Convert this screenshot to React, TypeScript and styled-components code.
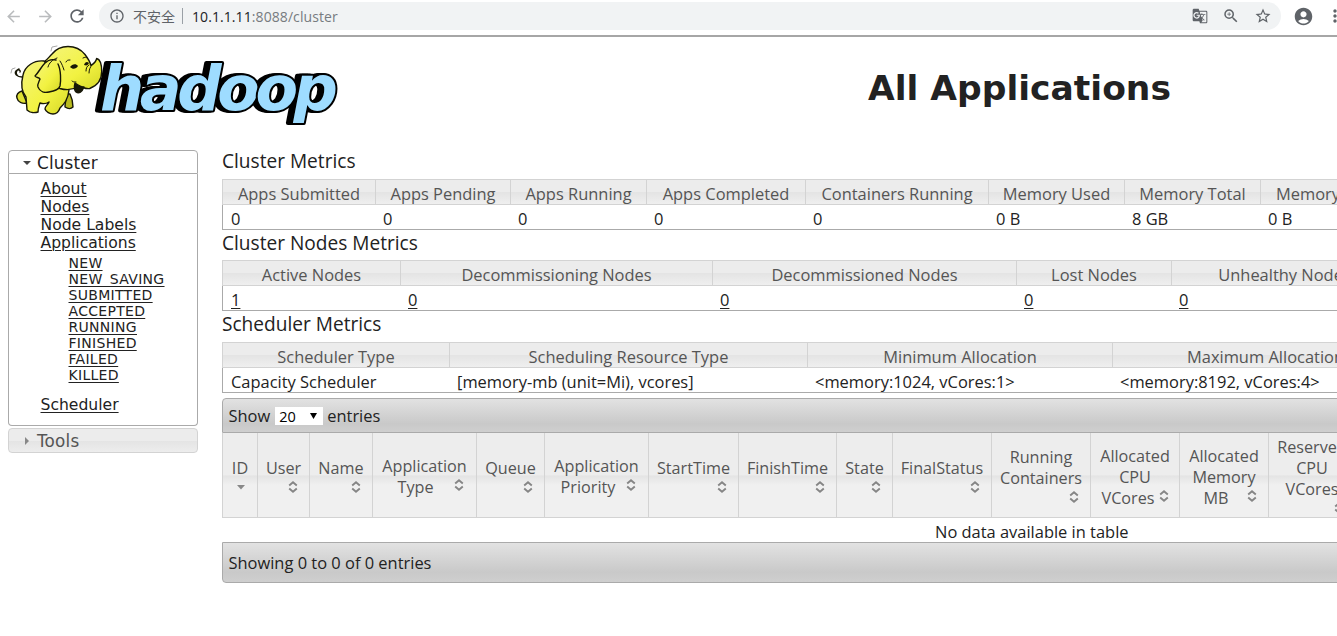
import React from 'react';
import styled, { createGlobalStyle } from 'styled-components';
import { MdAccountCircle, MdMoreVert, MdOutlineStarBorder, MdZoomIn, MdArrowBack, MdArrowForward, MdRefresh, MdInfoOutline, MdGTranslate } from 'react-icons/md';

const Global = createGlobalStyle`
  * { box-sizing: border-box; }
  html, body { margin: 0; padding: 0; background: #fff; overflow: hidden; }
  body { font-family: 'Open Sans', 'Noto Sans', 'Noto Sans CJK SC', sans-serif; font-size: 16.45px; color: #222; }
`;

const Page = styled.div`
  width: 100vw;
  height: 100vh;
  overflow: hidden;
  background: #fff;
`;

const BrowserBar = styled.div`
  height: 37px;
  display: flex;
  align-items: center;
  padding-bottom: 3px;
  border-bottom: 2px solid #a6a6a6;
  color: #5f6368;
  svg { flex: none; display: block; }
`;

const NavButton = styled.span<{ $w: number; $faded?: boolean }>`
  width: ${p => p.$w}px;
  flex: none;
  display: flex;
  justify-content: center;
  color: ${p => (p.$faded ? '#babcbe' : '#5f6368')};
`;

const AddressBar = styled.div`
  width: 1182px;
  height: 28px;
  margin-left: 9px;
  padding: 0 9px 0 10px;
  border-radius: 14px;
  background: #f1f3f4;
  display: flex;
  align-items: center;
  flex: none;
`;

const Insecure = styled.span`
  margin-left: 8px;
  font: 14px/20px 'Noto Sans CJK SC', sans-serif;
  width: 43px;
  white-space: nowrap;
`;

const Divider = styled.span`
  width: 1px;
  height: 16px;
  margin: 0 9px 0 6px;
  background: #9aa0a6;
`;

const Url = styled.span`
  flex: 1;
  font-size: 14px;
  letter-spacing: 0.08px;
  color: #777b80;
  b { font-weight: 400; color: #202124; }
`;

const AddressActions = styled.span`
  display: flex;
  align-items: center;
  gap: 14px;
`;

const Header = styled.header`
  height: 113px;
  display: flex;
`;

const Title = styled.h1`
  margin: 0;
  padding: 29px 0 0 518px;
  font: bold 34.5px/44px 'DejaVu Sans', sans-serif;
  white-space: nowrap;
`;

const Body = styled.div`
  display: flex;
  gap: 24px;
  padding-left: 8px;
`;

const Sidebar = styled.nav`
  width: 190px;
  flex: none;
  font-family: 'DejaVu Sans', sans-serif;
`;

const SideHead = styled.div<{ $open?: boolean }>`
  height: ${p => (p.$open ? 24 : 25)}px;
  display: flex;
  align-items: center;
  gap: 5px;
  padding: 1px 0 0 13px;
  font-size: 16.8px;
  letter-spacing: 0.2px;
  border: 1px solid ${p => (p.$open ? '#aaa' : '#d3d3d3')};
  border-radius: ${p => (p.$open ? '4px 4px 0 0' : '4px')};
  color: ${p => (p.$open ? '#212121' : '#555')};
  background: ${p => (p.$open ? '#fff' : 'linear-gradient(#ececec 0 50%, #e4e4e4 52%, #ededed)')};
`;

const SidePanel = styled.div`
  height: 252px;
  margin-bottom: 2px;
  padding: 6px 0 0 31px;
  border: 1px solid #aaa;
  border-top: 0;
  border-radius: 0 0 4px 4px;
`;

const SideLink = styled.div<{ $sub?: boolean }>`
  margin-left: ${p => (p.$sub ? 28.5 : 0.5)}px;
  font-size: ${p => (p.$sub ? 14 : 15.6)}px;
  letter-spacing: ${p => (p.$sub ? 0.3 : 0)}px;
  line-height: ${p => (p.$sub ? 16 : 18)}px;
  text-decoration: underline;
  text-decoration-thickness: 1px;
  text-underline-offset: 2px;
  white-space: pre;
`;

const SubList = styled.div`
  padding: 3px 0 13px;
`;

const Main = styled.main`
  width: 1250px;
  flex: none;
`;

const SectionTitle = styled.h3<{ $h: number; $line: number }>`
  height: ${p => p.$h}px;
  margin: 0;
  font-weight: 400;
  font-size: 19.1px;
  line-height: ${p => p.$line}px;
`;

const GridRow = styled.div<{ $cols: string }>`
  display: grid;
  grid-template-columns: ${p => p.$cols};
`;

const HeadCell = styled.div`
  height: 26px;
  padding-top: 2px;
  border: 1px solid #d3d3d3;
  border-right: 0;
  background: linear-gradient(#ececec 0 50%, #e4e4e4 52%, #efefef);
  color: #555;
  line-height: 23px;
  text-align: center;
  white-space: nowrap;
`;

const ValueRow = styled(GridRow)`
  height: 25px;
  border: 1px solid #aaa;
  border-top: 0;
`;

const ValueCell = styled.div<{ $link?: boolean }>`
  padding-left: 8px;
  line-height: 28px;
  height: 24px;
  white-space: nowrap;
  text-decoration: ${p => (p.$link ? 'underline' : 'none')};
  text-decoration-thickness: 1px;
  text-underline-offset: 2px;
  & + & { padding-left: 7px; }
`;

const Toolbar = styled.div<{ $bottom?: boolean }>`
  height: ${p => (p.$bottom ? 41 : 35)}px;
  margin-top: ${p => (p.$bottom ? 0 : 5)}px;
  display: flex;
  align-items: center;
  padding: 0 5.5px;
  border: 1px solid #aaa;
  border-radius: ${p => (p.$bottom ? '0 0 4px 4px' : '4px 4px 0 0')};
  background: linear-gradient(#e2e2e2, #c9c9c9 75%, #cfcfcf);
`;

const PageSize = styled.span`
  width: 48px;
  height: 18px;
  margin: 1px 4px 0 5px;
  padding: 0 6px 0 4px;
  display: flex;
  align-items: center;
  justify-content: space-between;
  background: #fff;
  color: #000;
  font-size: 14.5px;
`;

const AppsHead = styled.div<{ $pad: number }>`
  height: 85px;
  padding-top: ${p => p.$pad}px;
  border-left: 1px solid #d3d3d3;
  border-bottom: 1px solid #d3d3d3;
  background: linear-gradient(#ededed 0 50%, #e4e4e4 51%, #f0f0f0 62%);
  color: #555;
  font-size: 16.2px;
  line-height: 21px;
  display: flex;
  flex-direction: column;
  align-items: center;
  white-space: nowrap;
`;

const LastLine = styled.span<{ $gap: number; $indent: number }>`
  display: flex;
  gap: ${p => p.$gap}px;
  padding-left: ${p => p.$indent}px;
`;

const OwnLine = styled.span`
  width: 100%;
  height: 16px;
  padding-right: 11px;
  display: flex;
  justify-content: flex-end;
`;

const Empty = styled.div`
  height: 24px;
  padding-left: 713px;
  line-height: 27px;
`;

const Triangle = ({ dir }: { dir: 'down' | 'right' }) => (
  <svg width="10" height="10" viewBox="0 0 10 10">
    <path d={dir === 'down' ? 'M1 3h8L5 7z' : 'M3 1v8l4-4z'} fill={dir === 'down' ? '#444' : '#888'} />
  </svg>
);

const SortIcon = () => (
  <svg width="10" height="16" viewBox="0 0 10 16" fill="none" stroke="#858585" strokeWidth="1.9">
    <path d="M1.2 6.4 5 3.2l3.8 3.2M1.2 9.6 5 12.8l3.8-3.2" />
  </svg>
);

const SortedIcon = () => (
  <svg width="10" height="16" viewBox="0 0 10 16"><path d="M1 6h8L5 10.4z" fill="#888" /></svg>
);

const Wordmark = styled.text`
  font: italic bold 62px 'DejaVu Sans', sans-serif;
  fill: #9edcff;
  stroke: #000;
  stroke-width: 4px;
  stroke-linejoin: round;
  paint-order: stroke;
  filter: drop-shadow(-3px 0 0 #000) drop-shadow(-2px 0 0 #000);
`;

const Logo = () => (
  <svg width="350" height="100" viewBox="0 37 350 100">
    <defs>
      <linearGradient id="skin" x1="0" y1="0" x2="1" y2="1">
        <stop offset="0" stopColor="#f5f57c" />
        <stop offset=".6" stopColor="#f2f241" />
        <stop offset="1" stopColor="#d5d727" />
      </linearGradient>
    </defs>
    <Wordmark x="100" y="109.5" textLength="238" lengthAdjust="spacing">hadoop</Wordmark>
    <g fill="url(#skin)" stroke="#171707" strokeWidth="1.4" strokeLinejoin="round" strokeLinecap="round">
      <path d="M22 77c-5 0-8-3-6-6 2-2 5-1 4 1M19 69c-3 1-4 5-1 7" fill="none" />
      <path d="M22 91c-4 1-6 4-5 7 1 4 5 6 10 5z" fill="#dfe034" />
      <path d="M67 94c-1 5-2 9-2 13 3 2 6 2 8 0 0-5-1-9-3-13z" fill="#b9bb1e" />
      <path d="M44 61c-10-1-19 5-21 14-2 8-2 16 3 22l1 13c3 3 8 3 11 2 0-4 1-6 2-9 3 1 6 1 9-1-1 3-4 4-4 7 1 3 5 5 8 5 4 0 6-3 7-6 4-4 8-8 9-18z" />
      <path d="M45 61c3-2 4-4 7-7 4-5 10-7.500 16-7.500 8 0 13 3 17 8 3 4 5 7 6 11 3-2 5-4 5.700-7 4 1 5 7 5 13 0 8-4 14-12 17-4 1-8-2-11-2-5 3-12 4-19 2z" />
      <path d="M56 60c-4-1-8 0-11 3-4 4-6 9-10 13 1 2 4 1 5 3-1 3-3 5-2 8 2 5 7 6 11 5 5-1 10-2 11-6 1-5 1-16-2-22" />
      <path d="M57 58c-5 2-8 5-9 9M60 61c2 3 3 6 4 9" fill="none" strokeWidth="1" />
      <path d="M75 83c3 2 6 4 9 4-2 5-5 7-8 5-2-2-2-5-1-9z" fill="#171707" />
      <path d="M66 62c1-2 2-2 4-2M83 58c2-1 3-1 4 0M72 81c1 1 2 1 4 1M86 71c0-3 1-5 3-6M89 73c0-3 1-6 3-8" fill="none" strokeWidth="1" />
      <path d="M70 67c2-3 6-4 8-1-2 3-5 4-8 1zM84 65c1-3 3-4 5-2-1 2-2 3-5 2z" fill="#171707" stroke="none" />
      <path d="M51 51l1-4 5-1M11 73l1-4 3-1" fill="none" stroke="#aaa" strokeWidth="1" />
    </g>
  </svg>
);

const clusterCols = '153px 135px 136px 159px 183px 136px 136px 170px';
const nodeCols = '178px 312px 304px 155px 226px';
const schedulerCols = '227px 358px 305px 306px';
const appCols = '35px 52px 63px 104px 68px 104px 90px 98px 56px 99px 99px 89px 89px 87px';

const clusterMetrics = [
  ['Apps Submitted', '0'], ['Apps Pending', '0'], ['Apps Running', '0'], ['Apps Completed', '0'],
  ['Containers Running', '0'], ['Memory Used', '0 B'], ['Memory Total', '8 GB'], ['Memory Reserved', '0 B'],
];
const nodeMetrics = [
  ['Active Nodes', '1'], ['Decommissioning Nodes', '0'], ['Decommissioned Nodes', '0'], ['Lost Nodes', '0'], ['Unhealthy Nodes', '0'],
];
const schedulerMetrics = [
  ['Scheduler Type', 'Capacity Scheduler'], ['Scheduling Resource Type', '[memory-mb (unit=Mi), vcores]'],
  ['Minimum Allocation', '<memory:1024, vCores:1>'], ['Maximum Allocation', '<memory:8192, vCores:4>'],
];

type AppCol = { lines: string[]; pad: number; gap?: number; indent?: number; sorted?: boolean };
const appHeads: AppCol[] = [
  { lines: ['ID'], pad: 25, sorted: true },
  { lines: ['User'], pad: 25 },
  { lines: ['Name'], pad: 25 },
  { lines: ['Application', 'Type'], pad: 23, gap: 20, indent: 12 },
  { lines: ['Queue'], pad: 25 },
  { lines: ['Application', 'Priority'], pad: 23, gap: 11, indent: 4 },
  { lines: ['StartTime'], pad: 25 },
  { lines: ['FinishTime'], pad: 25 },
  { lines: ['State'], pad: 25 },
  { lines: ['FinalStatus'], pad: 25 },
  { lines: ['Running', 'Containers'], pad: 14 },
  { lines: ['Allocated', 'CPU', 'VCores'], pad: 13, gap: 4 },
  { lines: ['Allocated', 'Memory', 'MB'], pad: 13, gap: 18, indent: 12 },
  { lines: ['Reserved', 'CPU', 'VCores'], pad: 4 },
];

const MetricTable = ({ cols, data, link }: { cols: string; data: string[][]; link?: boolean }) => (
  <>
    <GridRow $cols={cols}>{data.map(([h]) => <HeadCell key={h}>{h}</HeadCell>)}</GridRow>
    <ValueRow $cols={cols}>{data.map(([h, v]) => <ValueCell key={h} $link={link}>{v}</ValueCell>)}</ValueRow>
  </>
);

const AppHeadCell = ({ col }: { col: AppCol }) => {
  const inline = col.gap !== undefined;
  const plain = inline ? col.lines.slice(0, -1) : col.lines;
  return (
    <AppsHead $pad={col.pad}>
      {plain.map(l => <span key={l}>{l}</span>)}
      {inline
        ? <LastLine $gap={col.gap!} $indent={col.indent ?? 0}><span>{col.lines[col.lines.length - 1]}</span><SortIcon /></LastLine>
        : <OwnLine>{col.sorted ? <SortedIcon /> : <SortIcon />}</OwnLine>}
    </AppsHead>
  );
};

const subLinks = ['NEW', 'NEW_SAVING', 'SUBMITTED', 'ACCEPTED', 'RUNNING', 'FINISHED', 'FAILED', 'KILLED'];

export default function App() {
  return (
    <Page>
      <Global />
      <BrowserBar>
        <NavButton $w={26} $faded><MdArrowBack size={19} /></NavButton>
        <NavButton $w={38} $faded><MdArrowForward size={19} /></NavButton>
        <NavButton $w={26}><MdRefresh size={20} /></NavButton>
        <AddressBar>
          <MdInfoOutline size={16} />
          <Insecure>不安全</Insecure>
          <Divider />
          <Url><b>10.1.1.11</b>:8088/cluster</Url>
          <AddressActions>
            <MdGTranslate size={16} />
            <MdZoomIn size={18} />
            <MdOutlineStarBorder size={18} />
          </AddressActions>
        </AddressBar>
        <NavButton $w={44}><MdAccountCircle size={21} /></NavButton>
        <MdMoreVert size={20} />
      </BrowserBar>
      <Header>
        <Logo />
        <Title>All Applications</Title>
      </Header>
      <Body>
        <Sidebar>
          <SideHead $open><Triangle dir="down" />Cluster</SideHead>
          <SidePanel>
            {['About', 'Nodes', 'Node Labels', 'Applications'].map(l => <SideLink key={l}>{l}</SideLink>)}
            <SubList>{subLinks.map(l => <SideLink key={l} $sub>{l}</SideLink>)}</SubList>
            <SideLink>Scheduler</SideLink>
          </SidePanel>
          <SideHead><Triangle dir="right" />Tools</SideHead>
        </Sidebar>
        <Main>
          <SectionTitle $h={29} $line={22}>Cluster Metrics</SectionTitle>
          <MetricTable cols={clusterCols} data={clusterMetrics} />
          <SectionTitle $h={30} $line={27}>Cluster Nodes Metrics</SectionTitle>
          <MetricTable cols={nodeCols} data={nodeMetrics} link />
          <SectionTitle $h={31} $line={27}>Scheduler Metrics</SectionTitle>
          <MetricTable cols={schedulerCols} data={schedulerMetrics} />
          <Toolbar>
            Show
            <PageSize>20<svg width="7" height="6"><path d="M0 0h7L3.5 6z" /></svg></PageSize>
            entries
          </Toolbar>
          <GridRow $cols={appCols}>{appHeads.map((c, i) => <AppHeadCell key={i} col={c} />)}</GridRow>
          <Empty>No data available in table</Empty>
          <Toolbar $bottom>Showing 0 to 0 of 0 entries</Toolbar>
        </Main>
      </Body>
    </Page>
  );
}
